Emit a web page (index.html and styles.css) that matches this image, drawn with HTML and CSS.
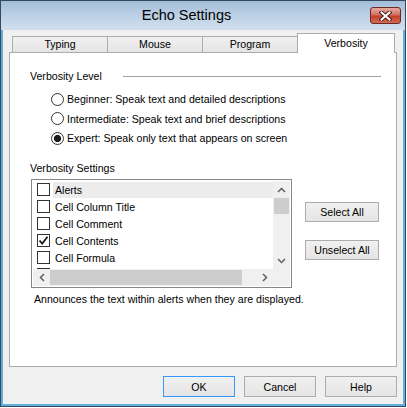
FILE: index.html
```html
<!DOCTYPE html>
<html>
<head>
<meta charset="utf-8">
<link rel="stylesheet" href="styles.css">
</head>
<body>
<div class="window">
  <div class="titlebar">
    <div class="title">Echo Settings</div>
    <div class="close">
      <svg width="13" height="10" viewBox="0 0 13 10">
        <path d="M2.5 1.5 L10.5 8.5 M10.5 1.5 L2.5 8.5" stroke="#4a1f1a" stroke-width="4" stroke-linecap="square" fill="none"/>
        <path d="M2.5 1.5 L10.5 8.5 M10.5 1.5 L2.5 8.5" stroke="#ffffff" stroke-width="2" stroke-linecap="square" fill="none"/>
      </svg>
    </div>
  </div>
  <div class="client">
    <div class="tabs">
      <div class="tab">Typing</div>
      <div class="tab">Mouse</div>
      <div class="tab">Program</div>
      <div class="tab active">Verbosity</div>
    </div>
    <div class="panel">
      <div class="group-head">
        <span>Verbosity Level</span>
        <span class="rule"></span>
      </div>
      <div class="radios">
        <div class="radio-row"><span class="radio"></span><span class="radio-text">Beginner: Speak text and detailed descriptions</span></div>
        <div class="radio-row"><span class="radio"></span><span class="radio-text">Intermediate: Speak text and brief descriptions</span></div>
        <div class="radio-row"><span class="radio checked"></span><span class="radio-text">Expert: Speak only text that appears on screen</span></div>
      </div>
      <div class="group-head settings-head"><span>Verbosity Settings</span></div>
      <div class="settings-row">
        <div class="listbox">
          <div class="items">
            <div class="item"><span class="check"></span><span class="label sel">Alerts</span></div>
            <div class="item"><span class="check"></span><span class="label">Cell Column Title</span></div>
            <div class="item"><span class="check"></span><span class="label">Cell Comment</span></div>
            <div class="item"><span class="check on"><svg width="11" height="11" viewBox="0 0 11 11"><path d="M1.5 5.5 L4.2 8.5 L9.5 1.8" stroke="#1a1a1a" stroke-width="1.8" fill="none"/></svg></span><span class="label">Cell Contents</span></div>
            <div class="item"><span class="check"></span><span class="label">Cell Formula</span></div>
            <div class="item"><span class="check"></span><span class="label"></span></div>
          </div>
          <div class="vscroll">
            <div class="arrow"><svg width="9" height="6" viewBox="0 0 9 6"><path d="M1 5 L4.5 1.5 L8 5" stroke="#606060" stroke-width="1.5" fill="none"/></svg></div>
            <div class="vthumb"></div>
            <div class="vtrack"></div>
            <div class="arrow"><svg width="9" height="6" viewBox="0 0 9 6"><path d="M1 1 L4.5 4.5 L8 1" stroke="#606060" stroke-width="1.5" fill="none"/></svg></div>
          </div>
          <div class="hscroll">
            <div class="arrow"><svg width="6" height="9" viewBox="0 0 6 9"><path d="M5 1 L1.5 4.5 L5 8" stroke="#606060" stroke-width="1.5" fill="none"/></svg></div>
            <div class="hthumb"></div>
            <div class="htrack"></div>
            <div class="arrow"><svg width="6" height="9" viewBox="0 0 6 9"><path d="M1 1 L4.5 4.5 L1 8" stroke="#606060" stroke-width="1.5" fill="none"/></svg></div>
          </div>
          <div class="corner"></div>
        </div>
        <div class="side-buttons">
          <div class="btn side">Select All</div>
          <div class="btn side">Unselect All</div>
        </div>
      </div>
      <p class="desc">Announces the text within alerts when they are displayed.</p>
    </div>
    <div class="footer">
      <div class="btn foot default">OK</div>
      <div class="btn foot">Cancel</div>
      <div class="btn foot">Help</div>
    </div>
  </div>
</div>
</body>
</html>
```

FILE: styles.css
```css
* { box-sizing: border-box; }
html, body { margin: 0; padding: 0; background: #ffffff; }
body {
  font-family: "Liberation Sans", Arial, sans-serif;
  font-size: 10.6px;
  color: #000;
}
.window {
  width: 406px;
  height: 407px;
  border: 1px solid #34495e;
  background: #62ace0;
  display: flex;
  flex-direction: column;
}
.titlebar {
  height: 29px;
  flex: none;
  display: flex;
  align-items: flex-start;
  background: linear-gradient(to bottom, #a3bdd9 0%, #bcd0e5 50%, #d2e0ee 100%);
}
.title {
  flex: 1;
  text-align: center;
  font-size: 14.5px;
  line-height: 18px;
  padding-top: 5px;
  padding-left: 2px;
  color: #000;
}
.close {
  width: 31px;
  height: 17px;
  margin-top: 6px;
  margin-right: 4px;
  border: 1px solid #6b2a22;
  border-radius: 3px;
  background: linear-gradient(to bottom, #e6aa9d 0%, #d27263 45%, #c2402d 55%, #d06a55 100%);
  display: flex;
  align-items: center;
  justify-content: center;
}
.client {
  flex: 1;
  margin: 0 2px 2px 2px;
  background: #f0f0f0;
  padding: 3px 6px 7px 6px;
  display: flex;
  flex-direction: column;
}
.tabs {
  height: 19px;
  display: flex;
  align-items: flex-end;
  padding-left: 3px;
}
.tab {
  width: 96px;
  height: 16px;
  margin-right: -1px;
  border: 1px solid #acacac;
  border-bottom: none;
  background: linear-gradient(to bottom, #f0f0f0, #e5e5e5);
  text-align: center;
  font-size: 10.6px;
  line-height: 15px;
}
.tab.active {
  width: 98px;
  height: 20px;
  margin-bottom: -1px;
  background: #ffffff;
  position: relative;
  z-index: 1;
  line-height: 18px;
}
.panel {
  height: 315px;
  border: 1px solid #acacac;
  background: #ffffff;
  padding: 16px 15px 0 20px;
}
.group-head {
  display: flex;
  align-items: center;
  height: 14px;
  line-height: 14px;
}
.rule {
  flex: 1;
  height: 1px;
  background: #a0a0a0;
  margin-left: 21px;
}
.radios {
  margin-top: 6.5px;
  padding-left: 21px;
}
.radio-row {
  height: 19.5px;
  display: flex;
  align-items: center;
}
.radio {
  width: 13px;
  height: 13px;
  border: 1px solid #333333;
  border-radius: 50%;
  background: #ffffff;
  flex: none;
}
.radio.checked {
  background: radial-gradient(circle at center, #1c1c1c 0, #1c1c1c 3.3px, #ffffff 3.9px);
}
.radio-text {
  margin-left: 3px;
}
.settings-head {
  margin-top: 13px;
}
.settings-row {
  margin-top: 4px;
  display: flex;
  align-items: flex-start;
}
.listbox {
  margin-left: 1px;
  width: 261px;
  height: 109px;
  border: 1px solid #828790;
  padding: 1px;
  display: grid;
  grid-template-columns: 240px 17px;
  grid-template-rows: 88px 17px;
  background: #ffffff;
}
.items {
  overflow: hidden;
}
.item {
  height: 17px;
  display: flex;
  align-items: center;
}
.check {
  width: 13px;
  height: 13px;
  margin-left: 4px;
  border: 1px solid #333333;
  background: #ffffff;
  flex: none;
  display: flex;
  align-items: center;
  justify-content: center;
}
.label {
  flex: 1;
  height: 16px;
  line-height: 16px;
  margin-left: 3px;
  padding-left: 2px;
}
.label.sel {
  background: #ececec;
}
.vscroll {
  background: #f0f0f0;
  display: flex;
  flex-direction: column;
}
.vscroll .arrow {
  height: 17px;
  display: flex;
  align-items: center;
  justify-content: center;
}
.vthumb {
  height: 16px;
  margin: 0 1px;
  background: #cdcdcd;
}
.vtrack { flex: 1; }
.hscroll {
  background: #f0f0f0;
  display: flex;
}
.hscroll .arrow {
  width: 17px;
  display: flex;
  align-items: center;
  justify-content: center;
}
.hthumb {
  width: 192px;
  margin: 1px 0;
  background: #cdcdcd;
}
.htrack { flex: 1; }
.corner { background: #f0f0f0; }
.side-buttons {
  margin-left: 13px;
  padding-top: 23px;
  display: flex;
  flex-direction: column;
  gap: 18px;
}
.btn {
  border: 1px solid #acacac;
  background: linear-gradient(to bottom, #f0f0f0, #e5e5e5);
  display: flex;
  align-items: center;
  justify-content: center;
}
.btn.side {
  width: 74px;
  height: 20px;
}
.desc {
  margin: 4px 0 0 4px;
  line-height: 14px;
}
.footer {
  margin-top: 9px;
  display: flex;
  justify-content: flex-end;
  gap: 9px;
}
.btn.foot {
  width: 72px;
  height: 21px;
}
.btn.default {
  border-color: #3399ff;
}
```
